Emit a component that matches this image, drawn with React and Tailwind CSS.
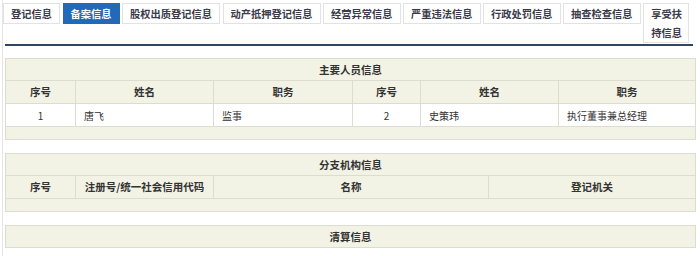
import React from "react";

const tabs = [
  "登记信息",
  "备案信息",
  "股权出质登记信息",
  "动产抵押登记信息",
  "经营异常信息",
  "严重违法信息",
  "行政处罚信息",
  "抽查检查信息",
  "享受扶持信息",
];

const cellBase = "border border-[#dcdcd0] h-[22px] p-0";

const SectionTable = ({ title, cols, rows, footer }) => {
  return (
    <table className="table-fixed w-[690px] border-collapse bg-[#f2f2e5] text-[#333]">
      <colgroup>
        {cols.map((c, i) => (
          <col key={i} style={{ width: c.w }} />
        ))}
      </colgroup>
      <tbody>
        {/* Title */}
        <tr>
          <td colSpan={cols.length} className={`${cellBase} text-center font-bold text-[10.5px]`}>
            {title}
          </td>
        </tr>

        {/* Header */}
        {cols[0].label && (
          <tr>
            {cols.map((c, i) => (
              <td key={i} className={`${cellBase} h-[23px] text-center font-bold text-[10.5px]`}>
                {c.label}
              </td>
            ))}
          </tr>
        )}

        {/* Data rows */}
        {rows.map((r, ri) => (
          <tr key={ri} className="bg-white">
            {r.map((v, i) => (
              <td
                key={i}
                className={`${cellBase} h-[23px] text-[10px] ${
                  cols[i].center ? "text-center" : "text-left pl-[8px]"
                }`}
              >
                {v}
              </td>
            ))}
          </tr>
        ))}

        {footer && (
          <tr>
            <td colSpan={cols.length} className="border border-[#dcdcd0] h-[13px] p-0"></td>
          </tr>
        )}
      </tbody>
    </table>
  );
};

const App = () => {
  return (
    <div
      className="w-[700px] h-[256px] overflow-hidden bg-white pl-[2px]"
      style={{ fontFamily: '"Noto Sans CJK SC", "Noto Sans", sans-serif' }}
    >
      <div className="h-full border-l border-[#e6e6e6]">
        {/* Tabs */}
        <div className="flex items-start gap-[2.5px] pt-[3px]">
          {tabs.map((t, i) => (
            <div
              key={t}
              className={`border px-[7px] text-[10.25px] leading-[19px] font-bold ${
                i === 1
                  ? "bg-[#2468b8] border-[#2468b8] text-white"
                  : "bg-white border-[#e2e2e2] text-[#3a3a4a]"
              } ${i === tabs.length - 1 ? "w-[46px] pl-[7px] pr-[2px]" : "whitespace-nowrap"}`}
            >
              {t}
            </div>
          ))}
        </div>

        {/* Divider */}
        <div className="ml-[2px] mt-[1px] w-[688px] h-[2px] bg-[#2f465e]"></div>

        <div className="ml-[2px] mt-[12px] flex flex-col gap-[13px]">
          <SectionTable
            title="主要人员信息"
            cols={[
              { label: "序号", w: "70px", center: true },
              { label: "姓名", w: "138px" },
              { label: "职务", w: "139px" },
              { label: "序号", w: "68px", center: true },
              { label: "姓名", w: "138px" },
              { label: "职务", w: "137px" },
            ]}
            rows={[["1", "唐飞", "监事", "2", "史策玮", "执行董事兼总经理"]]}
            footer
          />

          <SectionTable
            title="分支机构信息"
            cols={[
              { label: "序号", w: "70px", center: true },
              { label: "注册号/统一社会信用代码", w: "138px" },
              { label: "名称", w: "275px" },
              { label: "登记机关", w: "207px" },
            ]}
            rows={[]}
            footer
          />

          <SectionTable title="清算信息" cols={[{ label: "", w: "690px" }]} rows={[]} />
        </div>
      </div>
    </div>
  );
};

export default App;
